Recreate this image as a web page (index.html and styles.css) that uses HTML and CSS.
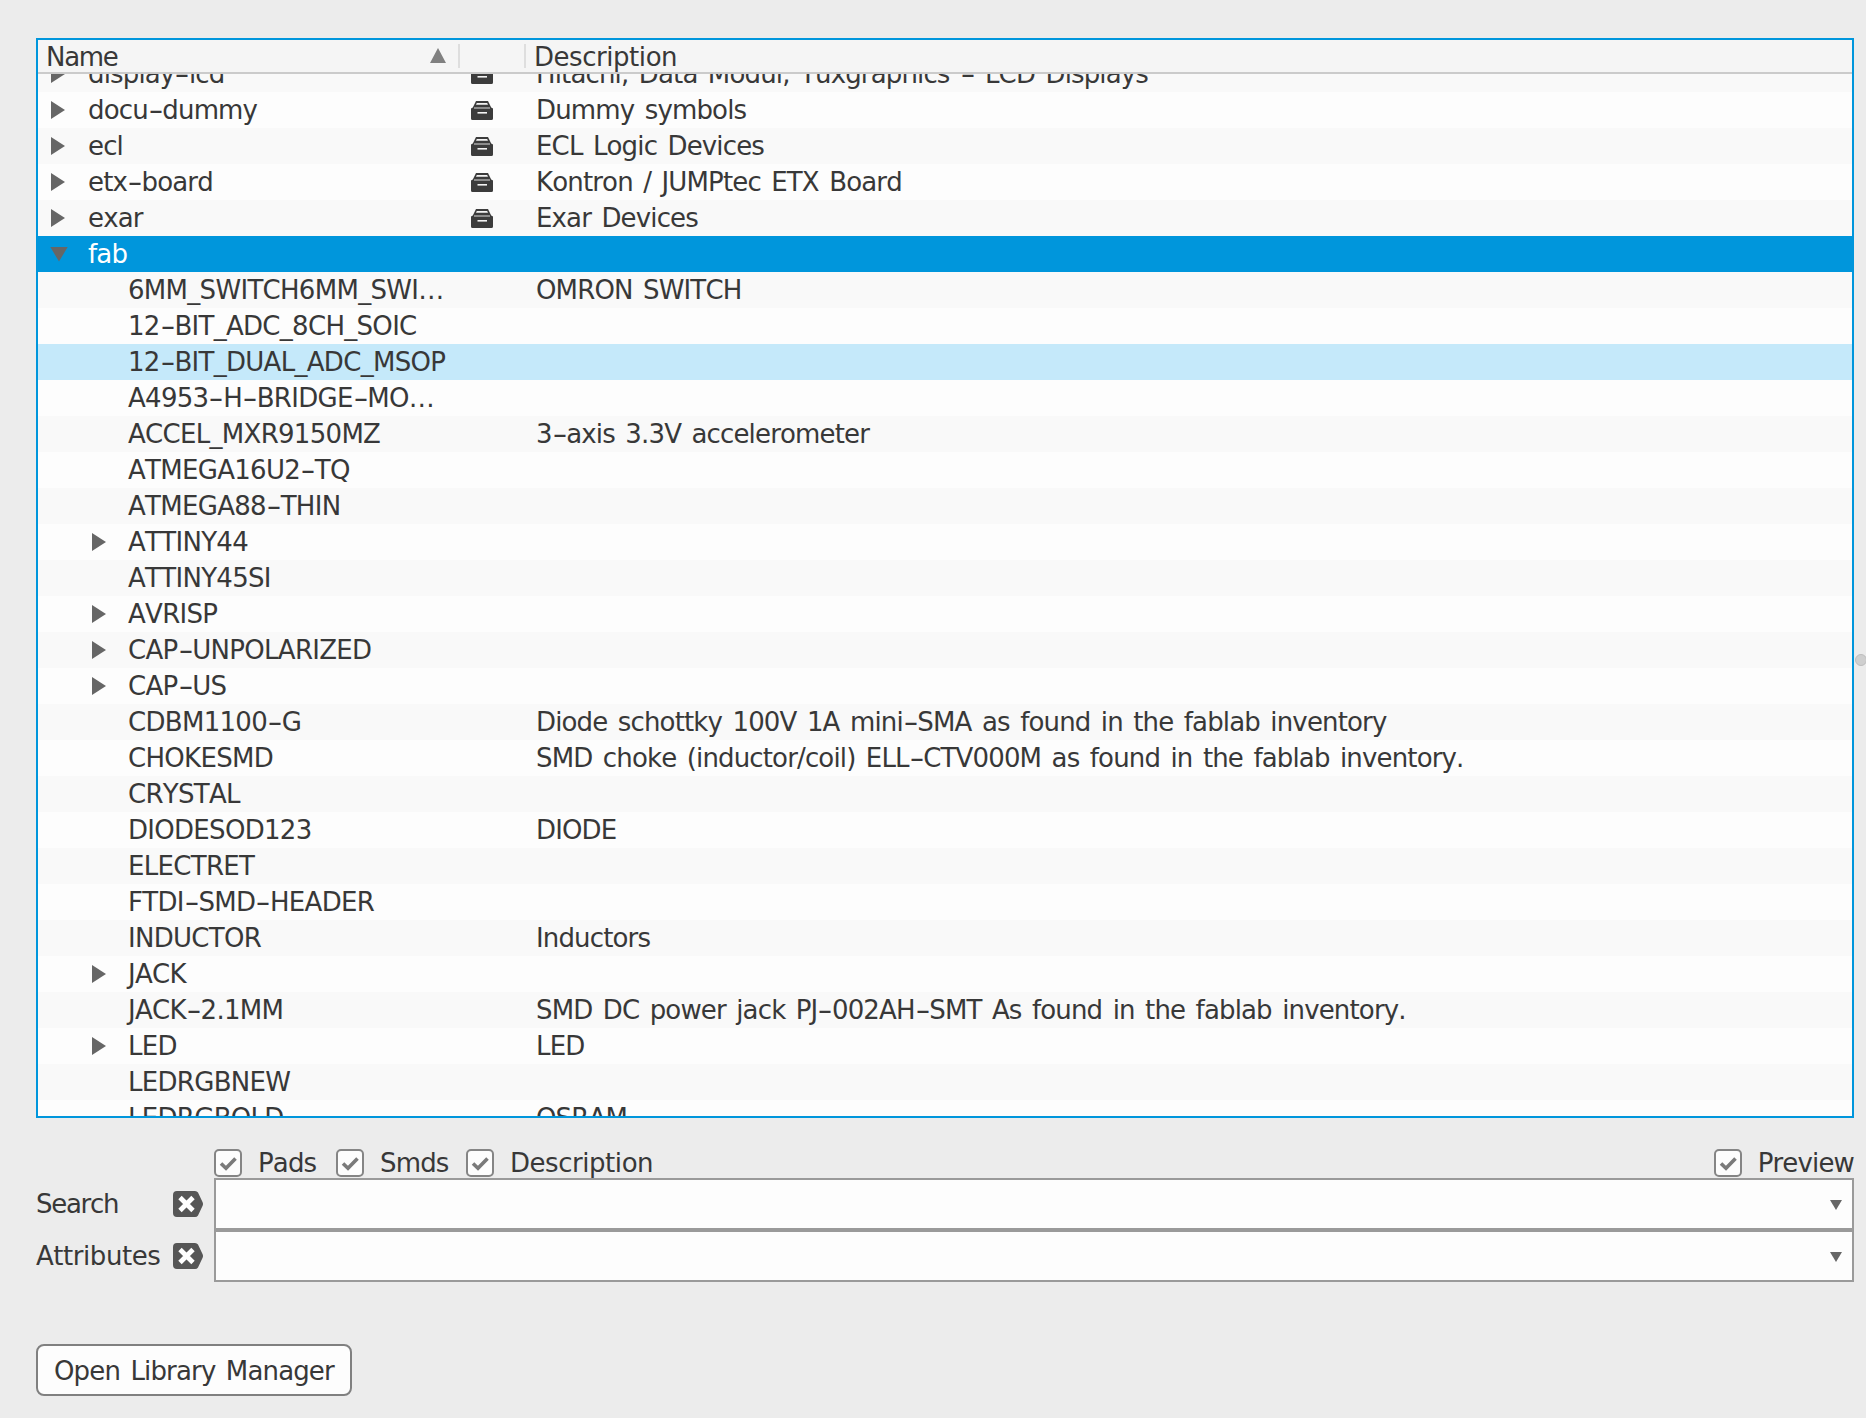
FILE: index.html
```html
<!DOCTYPE html>
<html lang="en">
<head>
<meta charset="utf-8">
<title>Library</title>
<link rel="stylesheet" href="styles.css">
</head>
<body>
<svg class="defs" width="0" height="0">
  <symbol id="drawer" viewBox="0 0 22 19" preserveAspectRatio="none">
    <path fill="#3c3c3c" d="M5 0h12l3.200 6.500 1.800 1V17.500a1.500 1.500 0 0 1-1.500 1.500H1.500A1.500 1.500 0 0 1 0 17.500V7.500l1.800-1z"/>
    <path fill="#f4f4f4" d="M5.800 2h10.400l.8 1.700H5z"/>
    <rect fill="#dcdcdc" x="3" y="6.500" width="16" height="1"/>
    <rect fill="#f4f4f4" x="6.500" y="11" width="9.500" height="1.600"/>
  </symbol>
  <symbol id="check" viewBox="0 0 24 24">
    <path fill="none" stroke="#7a7a7a" stroke-width="3.600" d="M5 12.500l5 4.800 9.500-9.800"/>
  </symbol>
  <symbol id="clear" viewBox="0 0 30 26">
    <path fill="#565656" d="M4 0h18q2 0 3 1.500L29.500 11q1 2 0 4L25 24.500Q24 26 22 26H4q-4 0-4-4V4q0-4 4-4z"/>
    <path fill="none" stroke="#fff" stroke-width="4.800" d="M7 6.500l13 13M20 6.500L7 19.500"/>
  </symbol>
</svg>

<main class="page">
  <section class="tree">
    <header class="thead">
      <div class="th th-name"><span class="tight">Name</span><i class="sort"></i></div>
      <div class="th th-mid"></div>
      <div class="th th-desc"><span class="wide">Description</span></div>
    </header>
    <div class="tbody">
      <div class="rows">
        <div class="row"><div class="name l1"><i class="tog"></i><span>display<span class="hy">-</span>lcd</span></div><div class="mid"><svg class="drawer"><use href="#drawer"/></svg></div><div class="desc">Hitachi, Data Modul, Tuxgraphics <span class="hy">-</span> LCD Displays</div></div>
        <div class="row"><div class="name l1"><i class="tog"></i><span>docu<span class="hy">-</span>dummy</span></div><div class="mid"><svg class="drawer"><use href="#drawer"/></svg></div><div class="desc">Dummy symbols</div></div>
        <div class="row"><div class="name l1"><i class="tog"></i><span>ecl</span></div><div class="mid"><svg class="drawer"><use href="#drawer"/></svg></div><div class="desc">ECL Logic Devices</div></div>
        <div class="row"><div class="name l1"><i class="tog"></i><span>etx<span class="hy">-</span>board</span></div><div class="mid"><svg class="drawer"><use href="#drawer"/></svg></div><div class="desc">Kontron / JUMPtec ETX Board</div></div>
        <div class="row"><div class="name l1"><i class="tog"></i><span>exar</span></div><div class="mid"><svg class="drawer"><use href="#drawer"/></svg></div><div class="desc">Exar Devices</div></div>
        <div class="row selected"><div class="name l1"><i class="tog open"></i><span>fab</span></div><div class="mid"></div><div class="desc"></div></div>
        <div class="row"><div class="name l2"><i class="slot"></i><span>6MM_SWITCH6MM_SWI…</span></div><div class="mid"></div><div class="desc">OMRON SWITCH</div></div>
        <div class="row"><div class="name l2"><i class="slot"></i><span>12<span class="hy">-</span>BIT_ADC_8CH_SOIC</span></div><div class="mid"></div><div class="desc"></div></div>
        <div class="row hover"><div class="name l2"><i class="slot"></i><span>12<span class="hy">-</span>BIT_DUAL_ADC_MSOP</span></div><div class="mid"></div><div class="desc"></div></div>
        <div class="row"><div class="name l2"><i class="slot"></i><span>A4953<span class="hy">-</span>H<span class="hy">-</span>BRIDGE<span class="hy">-</span>MO…</span></div><div class="mid"></div><div class="desc"></div></div>
        <div class="row"><div class="name l2"><i class="slot"></i><span>ACCEL_MXR9150MZ</span></div><div class="mid"></div><div class="desc">3<span class="hy">-</span>axis 3.3V accelerometer</div></div>
        <div class="row"><div class="name l2"><i class="slot"></i><span>ATMEGA16U2<span class="hy">-</span>TQ</span></div><div class="mid"></div><div class="desc"></div></div>
        <div class="row"><div class="name l2"><i class="slot"></i><span>ATMEGA88<span class="hy">-</span>THIN</span></div><div class="mid"></div><div class="desc"></div></div>
        <div class="row"><div class="name l2"><i class="tog"></i><span>ATTINY44</span></div><div class="mid"></div><div class="desc"></div></div>
        <div class="row"><div class="name l2"><i class="slot"></i><span>ATTINY45SI</span></div><div class="mid"></div><div class="desc"></div></div>
        <div class="row"><div class="name l2"><i class="tog"></i><span>AVRISP</span></div><div class="mid"></div><div class="desc"></div></div>
        <div class="row"><div class="name l2"><i class="tog"></i><span>CAP<span class="hy">-</span>UNPOLARIZED</span></div><div class="mid"></div><div class="desc"></div></div>
        <div class="row"><div class="name l2"><i class="tog"></i><span>CAP<span class="hy">-</span>US</span></div><div class="mid"></div><div class="desc"></div></div>
        <div class="row"><div class="name l2"><i class="slot"></i><span>CDBM1100<span class="hy">-</span>G</span></div><div class="mid"></div><div class="desc">Diode schottky 100V 1A mini<span class="hy">-</span>SMA as found in the fablab inventory</div></div>
        <div class="row"><div class="name l2"><i class="slot"></i><span>CHOKESMD</span></div><div class="mid"></div><div class="desc">SMD choke (inductor/coil) ELL<span class="hy">-</span>CTV000M as found in the fablab inventory.</div></div>
        <div class="row"><div class="name l2"><i class="slot"></i><span>CRYSTAL</span></div><div class="mid"></div><div class="desc"></div></div>
        <div class="row"><div class="name l2"><i class="slot"></i><span>DIODESOD123</span></div><div class="mid"></div><div class="desc">DIODE</div></div>
        <div class="row"><div class="name l2"><i class="slot"></i><span>ELECTRET</span></div><div class="mid"></div><div class="desc"></div></div>
        <div class="row"><div class="name l2"><i class="slot"></i><span>FTDI<span class="hy">-</span>SMD<span class="hy">-</span>HEADER</span></div><div class="mid"></div><div class="desc"></div></div>
        <div class="row"><div class="name l2"><i class="slot"></i><span>INDUCTOR</span></div><div class="mid"></div><div class="desc">Inductors</div></div>
        <div class="row"><div class="name l2"><i class="tog"></i><span>JACK</span></div><div class="mid"></div><div class="desc"></div></div>
        <div class="row"><div class="name l2"><i class="slot"></i><span>JACK<span class="hy">-</span>2.1MM</span></div><div class="mid"></div><div class="desc">SMD DC power jack PJ<span class="hy">-</span>002AH<span class="hy">-</span>SMT As found in the fablab inventory.</div></div>
        <div class="row"><div class="name l2"><i class="tog"></i><span>LED</span></div><div class="mid"></div><div class="desc">LED</div></div>
        <div class="row"><div class="name l2"><i class="slot"></i><span>LEDRGBNEW</span></div><div class="mid"></div><div class="desc"></div></div>
        <div class="row"><div class="name l2"><i class="slot"></i><span>LEDRGBOLD</span></div><div class="mid"></div><div class="desc">OSRAM</div></div>
      </div>
    </div>
  </section>
  <i class="split-handle"></i>

  <section class="filters">
    <div class="checks">
      <label class="chk chk-pads"><svg class="box"><use href="#check"/></svg>Pads</label>
      <label class="chk chk-smds"><svg class="box"><use href="#check"/></svg>Smds</label>
      <label class="chk wide"><svg class="box"><use href="#check"/></svg>Description</label>
      <label class="chk chk-preview"><svg class="box"><use href="#check"/></svg>Preview</label>
    </div>
    <div class="field">
      <span class="label tight">Search</span>
      <svg class="clear"><use href="#clear"/></svg>
      <div class="combo"><i class="arrow"></i></div>
    </div>
    <div class="field">
      <span class="label wide">Attributes</span>
      <svg class="clear"><use href="#clear"/></svg>
      <div class="combo"><i class="arrow"></i></div>
    </div>
  </section>

  <button class="manager" type="button">Open Library Manager</button>
</main>
</body>
</html>
```
FILE: styles.css
```css
* { box-sizing: border-box; }
html, body { margin: 0; height: 100%; }
body {
  background: #ececec;
  color: #383838;
  font-family: "DejaVu Sans", "Noto Sans", sans-serif;
  font-size: 26px;
  font-kerning: none;
  letter-spacing: -0.85px;
  word-spacing: 3px;
  overflow: hidden;
}
.defs { position: absolute; }
.page {
  position: relative;
  padding: 38px 12px 0 36px;
  height: 1418px;
}
.wide { letter-spacing: -0.45px; }
.tight { letter-spacing: -1.3px; }
.hy {
  display: inline-block;
  transform: scaleX(1.6);
  margin: 0 3px;
}

/* tree table */
.tree {
  height: 1080px;
  border: 2px solid #0096dc;
  background: #fdfdfd;
  display: flex;
  flex-direction: column;
}
.thead {
  flex: none;
  height: 34px;
  display: flex;
  align-items: flex-start;
  background: #f5f5f5;
  border-bottom: 2px solid #cbcbcb;
}
.th { height: 24px; margin-top: 4px; line-height: 24px; }
.th span { position: relative; top: 1px; }
.th-name {
  width: 422px;
  padding: 0 12px 0 8px;
  border-right: 2px solid #dedede;
  display: flex;
  justify-content: space-between;
  align-items: center;
}
.sort {
  width: 16px;
  height: 15px;
  margin-top: -1px;
  background: #808080;
  clip-path: polygon(50% 0, 100% 100%, 0 100%);
}
.th-mid { width: 66px; border-right: 2px solid #dedede; }
.th-desc { padding-left: 8px; }

.tbody { flex: 1; overflow: hidden; }
.rows { margin-top: -18px; }
.row {
  display: flex;
  height: 36px;
  line-height: 36px;
  white-space: nowrap;
}
.row:nth-child(odd) { background: #f9f9f9; }
.row.selected { background: #0096dc; color: #fff; }
.row.hover { background: #c5e9fa; }
.name { width: 420px; display: flex; align-items: center; }
.name.l1 { padding-left: 13px; }
.name.l2 { padding-left: 54px; letter-spacing: -0.7px; }
.name.l2 > span { margin-left: -1px; }
.slot { flex: none; width: 37px; }
.tog {
  flex: none;
  width: 37px;
  height: 18px;
  background: linear-gradient(#666, #666) 0 0 / 14px 18px no-repeat;
  clip-path: polygon(0 0, 14px 50%, 0 100%);
}
.tog.open {
  height: 15px;
  margin-left: -1px;
  margin-right: 1px;
  background-size: 18px 15px;
  clip-path: polygon(0 0, 18px 0, 9px 100%);
}
.mid { width: 66px; display: flex; align-items: center; padding-left: 13px; }
.drawer { width: 22px; height: 19px; }
.desc { padding-left: 12px; }

.split-handle {
  position: absolute;
  left: 1855px;
  top: 654px;
  width: 12px;
  height: 12px;
  border-radius: 50%;
  background: #cfcfcf;
  border: 1px solid #bdbdbd;
}

/* filters */
.filters { margin-top: 30px; }
.checks {
  display: flex;
  height: 30px;
  padding-left: 178px;
  align-items: center;
}
.chk { display: flex; align-items: center; line-height: 28px; }
.box {
  width: 28px;
  height: 28px;
  margin-right: 16px;
  background: #fdfdfd;
  border: 2px solid #858585;
  border-radius: 5px;
}
.chk-pads { width: 122px; }
.chk-smds { width: 130px; }
.chk-preview { margin-left: auto; }
.field {
  display: flex;
  align-items: center;
  height: 52px;
}
.label { width: 137px; }
.clear { width: 30px; height: 26px; margin-right: 11px; }
.combo {
  position: relative;
  flex: 1;
  height: 52px;
  background: #fdfdfd;
  border: 2px solid #9a9a9a;
}
.arrow {
  position: absolute;
  right: 10px;
  top: 20px;
  width: 12px;
  height: 10px;
  background: #666;
  clip-path: polygon(0 0, 100% 0, 50% 100%);
}

.manager {
  display: block;
  margin-top: 62px;
  width: 316px;
  height: 52px;
  padding: 2px 0 0 16px;
  text-align: left;
  font: inherit;
  font-kerning: none;
  letter-spacing: inherit;
  word-spacing: inherit;
  color: inherit;
  background: #fdfdfd;
  border: 2px solid #808080;
  border-radius: 8px;
}
```
